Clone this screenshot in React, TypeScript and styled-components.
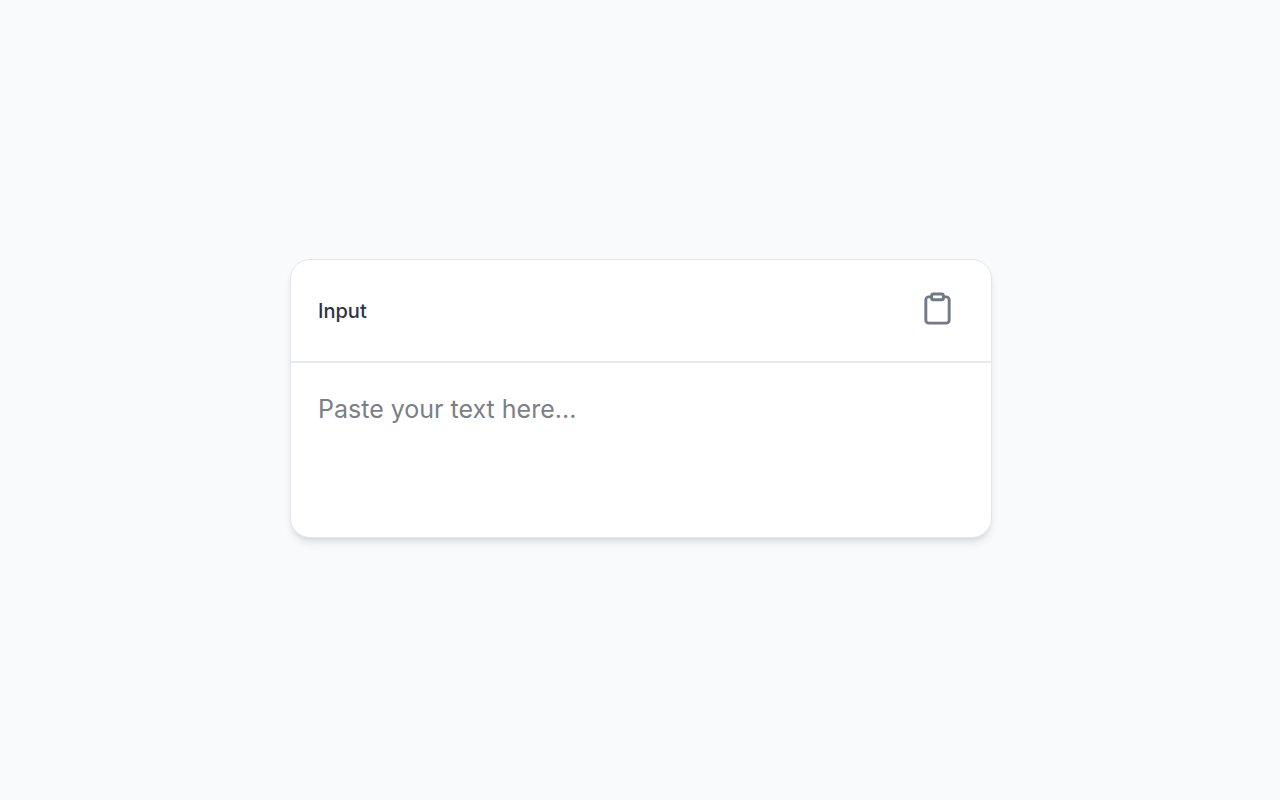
import React, { useState } from 'react';
import styled, { createGlobalStyle } from 'styled-components';
import { Clipboard } from 'lucide-react';

const GlobalStyle = createGlobalStyle`
  *, *::before, *::after { box-sizing: border-box; }
  body {
    margin: 0;
    background: #f9fafc;
    font-family: Inter, "Liberation Sans", sans-serif;
  }
`;

const Page = styled.main`
  min-height: 100vh;
  padding: 24px 24px 28px 26px;
  display: flex;
  align-items: center;
  justify-content: center;
`;

const Card = styled.section`
  width: 100%;
  max-width: 702px;
  background: #ffffff;
  border: 1px solid #e5e7eb;
  border-radius: 20px;
  box-shadow: 0 6px 10px -2px rgba(0, 0, 0, 0.1), 0 3px 6px -3px rgba(0, 0, 0, 0.1);
  overflow: hidden;
`;

const CardHeader = styled.header`
  display: flex;
  align-items: center;
  justify-content: space-between;
  padding: 23px 28px 27px 27px;
  border-bottom: 2px solid #e9eaee;
`;

const Label = styled.label`
  padding-top: 6px;
  font-size: 20px;
  line-height: 28px;
  font-weight: 500;
  color: #2a3349;
`;

const IconButton = styled.button`
  display: flex;
  padding: 8px;
  border: 0;
  border-radius: 8px;
  background: transparent;
  color: #737987;
  cursor: pointer;
`;

const TextArea = styled.textarea`
  display: block;
  width: 100%;
  height: 174px;
  padding: 28px 27px;
  border: 0;
  outline: 0;
  resize: none;
  background: transparent;
  font-family: inherit;
  font-size: 25px;
  font-weight: 400;
  line-height: 36px;
  color: #1e293b;

  &::placeholder {
    color: #7b7f88;
    opacity: 1;
  }
`;

export default function App() {
  const [text, setText] = useState('');

  const paste = async () => {
    try {
      setText(await navigator.clipboard.readText());
    } catch {
      // Clipboard access was denied: keep the current text.
    }
  };

  return (
    <>
      <GlobalStyle />
      <Page>
        <Card>
          <CardHeader>
            <Label htmlFor="input-text">Input</Label>
            <IconButton type="button" aria-label="Paste from clipboard" onClick={paste}>
              <Clipboard size={35} strokeWidth={2} />
            </IconButton>
          </CardHeader>
          <TextArea
            id="input-text"
            placeholder="Paste your text here..."
            value={text}
            onChange={(event) => setText(event.target.value)}
          />
        </Card>
      </Page>
    </>
  );
}
